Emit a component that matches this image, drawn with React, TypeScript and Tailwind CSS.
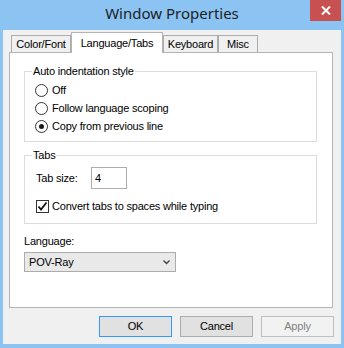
import { ReactNode } from 'react';

function Radio({ checked, label }: { checked?: boolean; label: string }) {
  return (
    <div className="flex h-[18px] items-center gap-[4px]">
      <span className="flex h-[13px] w-[13px] items-center justify-center rounded-full border border-[#333333] bg-white">
        {checked && <span className="h-[5px] w-[5px] rounded-full bg-[#1a1a1a]" />}
      </span>
      <span>{label}</span>
    </div>
  );
}

function Group({ title, children }: { title: string; children: ReactNode }) {
  return (
    <fieldset className="w-[293px] border border-[#dcdcdc] p-0">
      <legend className="ml-[7px] px-[1px] leading-[13px]">{title}</legend>
      {children}
    </fieldset>
  );
}

export default function App() {
  const tabs = [
    { label: 'Color/Font', w: 'w-[60px]' },
    { label: 'Language/Tabs', w: 'w-[92px]', active: true },
    { label: 'Keyboard', w: 'w-[55px]' },
    { label: 'Misc', w: 'w-[40px]' },
  ];

  return (
    <div className="flex h-[348px] w-[344px] flex-col bg-[#8bc3f3] px-[3px] pb-[4px] font-['Liberation_Sans',Arial,sans-serif] text-[11px] tracking-[-0.2px] text-black">
      {/* title bar */}
      <div className="relative flex h-[30px] shrink-0 items-center justify-center pb-[3px] font-['Noto_Sans',sans-serif] text-[15px] tracking-normal text-[#1e1e1e]">
        Window Properties
        <div className="absolute right-0 top-0 flex h-[21px] w-[31px] items-center justify-center bg-[#c75050]">
          <svg width="10" height="9" viewBox="0 0 10 9">
            <path d="M1 0.5 L9 8.5 M9 0.5 L1 8.5" stroke="white" strokeWidth="2" />
          </svg>
        </div>
      </div>

      {/* client area */}
      <div className="flex flex-1 flex-col bg-[#f0f0f0]">
        <div className="ml-[8px] flex h-[22px] items-end">
          {tabs.map((t) =>
            t.active ? (
              <div
                key={t.label}
                className={`relative z-10 -mb-px flex h-[21px] ${t.w} items-start justify-center border border-b-0 border-[#b4b4b4] bg-white pt-[2px]`}
              >
                {t.label}
              </div>
            ) : (
              <div
                key={t.label}
                className={`flex h-[17px] ${t.w} items-center justify-center border border-b-0 border-[#acacac] bg-[#f0f0f0]`}
              >
                {t.label}
              </div>
            )
          )}
        </div>

        <div className="ml-[6px] mr-[8px] flex h-[256px] flex-col border border-[#b4b4b4] bg-white px-[14px] pt-[12px]">
          <Group title="Auto indentation style">
            <div className="flex flex-col pb-[6px] pl-[10px] pt-[3px]">
              <Radio label="Off" />
              <Radio label="Follow language scoping" />
              <Radio label="Copy from previous line" checked />
            </div>
          </Group>

          <div className="mt-[7px]">
            <Group title="Tabs">
              <div className="flex flex-col pb-[9px] pl-[11px] pt-[5px]">
                <div className="flex h-[22px] items-center">
                  <span className="w-[55px]">Tab size:</span>
                  <div className="flex h-[22px] w-[36px] items-center border border-[#acacac] bg-white pl-[3px]">4</div>
                </div>
                <div className="mt-[9px] flex h-[16px] items-center gap-[3px]">
                  <span className="flex h-[13px] w-[13px] items-center justify-center border border-[#333333] bg-white">
                    <svg width="11" height="11" viewBox="0 0 11 11">
                      <path d="M1.5 5.5 L4 8.5 L9.5 1.5" stroke="#111" strokeWidth="1.8" fill="none" />
                    </svg>
                  </span>
                  <span>Convert tabs to spaces while typing</span>
                </div>
              </div>
            </Group>
          </div>

          <div className="mt-[11px] leading-[13px]">Language:</div>
          <div className="mt-[4px] flex h-[20px] w-[152px] items-center justify-between border border-[#acacac] bg-[#e9e9e9] pl-[4px] pr-[5px]">
            <span>POV-Ray</span>
            <svg width="7" height="5" viewBox="0 0 7 5">
              <path d="M0.5 0.5 L3.5 3.5 L6.5 0.5" stroke="#444" strokeWidth="1.4" fill="none" />
            </svg>
          </div>
        </div>

        <div className="mt-[8px] flex justify-end gap-[8px] pr-[7px]">
          <button className="flex h-[21px] w-[73px] items-center justify-center border border-[#3399ff] bg-[#e1e1e1]">OK</button>
          <button className="flex h-[21px] w-[73px] items-center justify-center border border-[#adadad] bg-[#e1e1e1]">Cancel</button>
          <button className="flex h-[21px] w-[73px] items-center justify-center border border-[#bfbfbf] bg-[#f2f2f2] text-[#838383]">Apply</button>
        </div>
      </div>
    </div>
  );
}
